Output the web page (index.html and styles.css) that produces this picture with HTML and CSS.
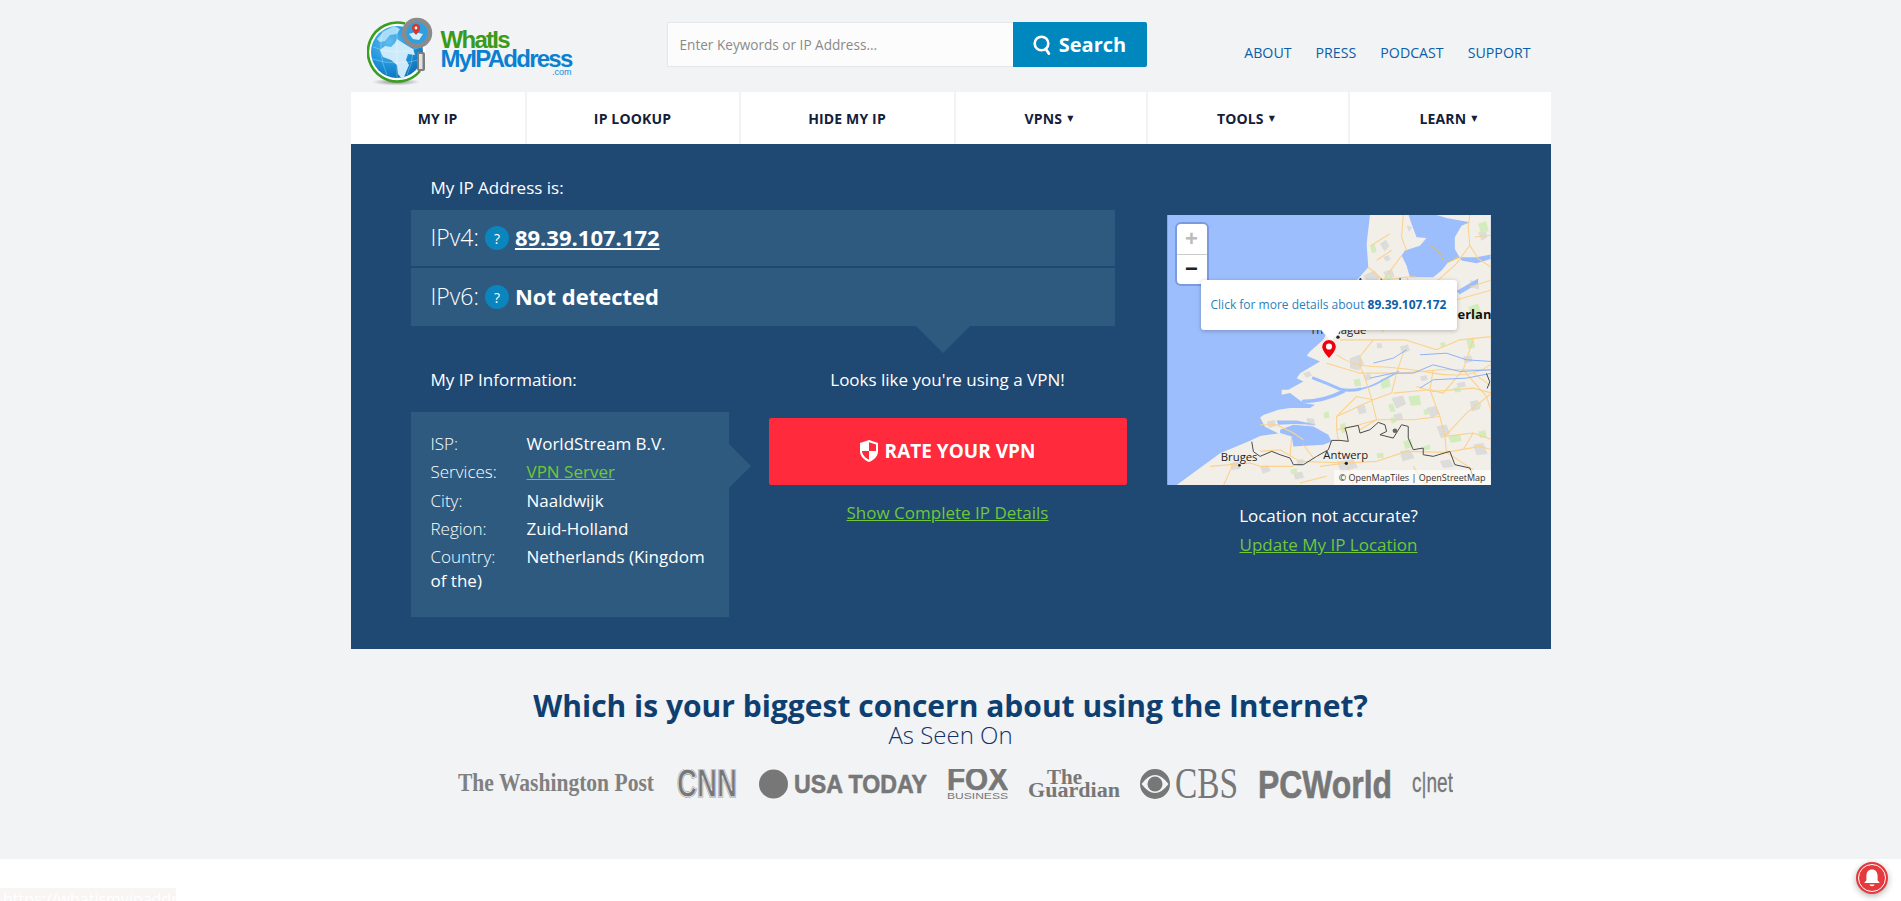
FILE: index.html
```html
<!DOCTYPE html>
<html lang="en">
<head>
<meta charset="utf-8">
<title>What Is My IP Address</title>
<link rel="stylesheet" href="styles.css">
</head>
<body>
<div class="page">
  <header class="header">
    <a class="logo">
      <svg class="logo-globe" width="68" height="68" viewBox="0 0 68 68">
        <defs>
          <radialGradient id="gl" cx="35%" cy="30%" r="80%"><stop offset="0" stop-color="#5fbcf0"/><stop offset=".55" stop-color="#1f94dc"/><stop offset="1" stop-color="#0a6cb6"/></radialGradient>
          <radialGradient id="sh"><stop offset="0" stop-color="#8a8a8a"/><stop offset="1" stop-color="#f1f3f5"/></radialGradient>
        </defs>
        <ellipse cx="29" cy="65" rx="24" ry="3.500" fill="url(#sh)"/>
        <circle cx="30" cy="35" r="29" fill="#fff"/>
        <path d="M38 6.500A29.500 29.500 0 1 0 53 54" fill="none" stroke="#3a9e1f" stroke-width="2.600"/>
        <circle cx="30" cy="35" r="26" fill="url(#gl)"/>
        <path d="M10 22l7-8 10-5 6 3-3 5-7 1-5 6-5 1z" fill="#a9dcf6"/>
        <path d="M30 22l6 4 10 6 2 6-7-1-2 6 3 5-3 7-3 8-5-6-1-9-6-5-8-3-3-7 5-4 6 1 4-4z" fill="#cdeafa"/>
        <path d="M6 30q24 10 48 0M5 42q25 8 50 0M16 12q-6 24 4 46M30 9v52M44 12q6 24-4 46" fill="none" stroke="#fff" stroke-width=".5" opacity=".55"/>
        <rect x="50" y="35" width="8" height="19" rx="2" fill="#7d7d7d"/>
        <rect x="52" y="37" width="3.500" height="15" fill="#e2e2e2"/>
        <circle cx="50" cy="16" r="13" fill="#2f9fe0" stroke="#8b8b8b" stroke-width="4.500"/>
        <path d="M42 17l6-2 8 2-4 6-6-1z" fill="#d5eefb"/>
        <path d="M49 7a4 4 0 0 1 4 4c0 3-4 7-4 7s-4-4-4-7a4 4 0 0 1 4-4z" fill="#d9352a"/>
        <circle cx="49" cy="11" r="1.400" fill="#fff"/>
      </svg>
      <span class="logo-text">
        <span class="logo-what">WhatIs</span>
        <span class="logo-my">MyIPAddress</span>
        <span class="logo-com">.com</span>
      </span>
    </a>
    <form class="search">
      <input class="search-input" type="text" placeholder="Enter Keywords or IP Address...">
      <button class="search-btn" type="button">
        <svg width="19" height="20" viewBox="0 0 19 20"><circle cx="8.500" cy="8.500" r="6.800" fill="none" stroke="#fff" stroke-width="2.600"/><path d="M12.800 14l3 4.600" stroke="#fff" stroke-width="2.800" stroke-linecap="round"/></svg>
        Search
      </button>
    </form>
    <nav class="toplinks">
      <a>ABOUT</a><a>PRESS</a><a>PODCAST</a><a>SUPPORT</a>
    </nav>
  </header>

  <nav class="mainnav">
    <a>MY IP</a>
    <a>IP LOOKUP</a>
    <a>HIDE MY IP</a>
    <a>VPNS <span class="caret">▼</span></a>
    <a>TOOLS <span class="caret">▼</span></a>
    <a>LEARN <span class="caret">▼</span></a>
  </nav>

  <main class="hero">
    <section class="hero-left">
      <div class="label">My IP Address is:</div>
      <div class="ip-row ip-row-4">
        <span class="ip-kind">IPv4:</span><span class="help">?</span><a class="ip-value ip-link">89.39.107.172</a>
      </div>
      <div class="ip-row ip-row-6">
        <span class="ip-kind">IPv6:</span><span class="help">?</span><span class="ip-value">Not detected</span>
      </div>
      <div class="lower">
        <div class="info-col">
          <div class="label label-info">My IP Information:</div>
          <div class="info-box">
            <div class="info-line"><span class="k">ISP:</span>WorldStream B.V.</div>
            <div class="info-line"><span class="k">Services:</span><a class="green">VPN Server</a></div>
            <div class="info-line"><span class="k">City:</span>Naaldwijk</div>
            <div class="info-line"><span class="k">Region:</span>Zuid-Holland</div>
            <div class="info-line"><span class="k">Country:</span>Netherlands (Kingdom of the)</div>
          </div>
        </div>
        <div class="vpn-col">
          <div class="vpn-msg">Looks like you're using a VPN!</div>
          <a class="rate-btn">
            <svg width="18" height="22" viewBox="0 0 18 22"><path d="M9 0l9 3v8c0 5.500-4 9-9 11-5-2-9-5.500-9-11V3z" fill="#fff"/><path d="M9 2.200l7 2.300V11H9zM9 11v8.600C5.200 17.800 2.300 15 2 11z" fill="#ff2a3c"/></svg>
            RATE YOUR VPN
          </a>
          <a class="green details">Show Complete IP Details</a>
        </div>
      </div>
    </section>
    <aside class="hero-right">
      <div class="map">
        <svg class="map-svg" width="324" height="270" viewBox="51 44 972 811">
          <rect x="51" y="44" width="972" height="811" fill="#9dbefc"/>
          <path d="M660 44L650 131 655 201 612 250 575 310 545 370 520 419 480 454 470 467 510 484 450 519 440 534 460 544 415 569 395 569 395 584 420 579 460 609 495 614 480 624 420 624 385 629 340 645 330 652 345 680 385 700 330 708 300 722 210 760 100 840 80 855H1023V44Z" fill="#f2efe9"/>
          <g class="urban">
            <path d="M690 130l18-12 10 20-14 16zM640 225l34-14 16 22-30 24zM700 170l16-6 6 14-14 6zM700 215l26-8 8 22-22 10z"/>
            <path d="M600 290l30-14 14 28-32 12zM770 75l16 6-8 14zM810 70l14-4 4 12-14 4zM985 95l22-6 6 22-18 10zM960 240l24 4 4 24-24-6z"/>
            <g transform="translate(330 389)">
              <path d="M270 85l28-10 14 26-16 22-26-8zM130 130l18-6 8 14-18 6zM420 50l24-6 6 18-22 10zM610 80l24-4 4 20-24 4zM350 40l14 0 4 14-16 2z"/>
              <path d="M395 205l34-8 10 26-30 14zM500 235l26-6 14 24-26 12zM530 290l30-6 10 28-26 14zM630 215l24-4 8 26-26 8zM290 230l24-4 6 22-22 6z"/>
              <path d="M420 365l30-6 14 26-36 10zM230 395l50-6 14 24-50 16zM140 265l22 2 4 20-24 0zM20 275l24-4 4 18-22 6zM400 255l24-6 6 20-24 4z"/>
              <path d="M640 345l30-6 14 34-34 4zM540 395l30-6 12 22-32 4zM100 430l26-4 6 18-26 6zM0 410l24-4 8 18-24 8zM480 140l20-4 4 14-18 4zM590 160l24-4 4 14-24 4zM330 130l-18 6 4 18 18-6z"/>
            </g>
            <path d="M240 790l24-6 8 22-26 4zM440 780l20-2 2 16-20 4z"/>
          </g>
          <g class="woods">
            <path d="M660 135l14-6 6 26-14 4zM705 225l16-4 2 14-14 4zM985 70l24-8 8 30-24 6zM955 320l30-10 14 44-30 6z"/>
            <g transform="translate(330 389)">
              <path d="M280 150l20-4 4 22-18 2zM360 150l28-6 4 26-26 8zM445 200l34-4 4 30-30 2zM490 240l14-2 2 16-12 2zM385 225l14-4 8 24-16 2zM650 220l12-4 2 14-12 2zM580 175l20-4 4 14-18 4z"/>
              <path d="M240 285l16-6 4 28-14 4zM430 335l24-8 4 24-22 8zM390 265l16-4 4 16-14 4zM565 320l36-6 4 20-32 6zM655 305l22-4 4 22-20 2zM490 350l20-6 2 14-18 4zM90 420l20-4 2 16-18 2zM350 370l20 0 2 14-20 2zM190 250l16-6 2 20-14 2zM620 30l20-8 6 30-20 6zM540 40l14-4 4 12-14 4z"/>
            </g>
          </g>
          <g fill="#9dbefc">
            <path d="M775 41L785 71 800 111 830 113 810 136 765 151 755 166 770 196 780 231 850 231 875 211 895 186 928 169 915 146 915 111 935 76 960 66 890 53 850 41Z"/>
            <path d="M930 171L980 171 1023 163V176L980 189 935 181Z"/>
            <path d="M920 272L985 235V250L930 282Z"/>
            <g transform="translate(330 389)">
              <path d="M60 300L100 285 160 290 205 315 215 335 190 345 100 350 95 320 60 310Z"/>
              <path d="M50 272L110 272 170 285 100 283 55 285Z"/>
            </g>
          </g>
          <g fill="none" stroke="#9dbefc" stroke-linecap="round" transform="translate(330 389)">
            <path d="M160 145Q200 160 240 178 270 185 300 178" stroke-width="9"/>
            <path d="M300 178Q340 170 370 150 400 135 415 125" stroke-width="5"/>
            <path d="M130 215Q190 215 250 185" stroke-width="11"/>
          </g>
          <g class="roads" transform="translate(330 389)">
            <path d="M230 75Q280 110 340 110T520 130 696 100M200 100L300 130 430 130 540 120 696 120M300 110L310 130 330 190 350 270"/>
            <path d="M430 70L410 130 395 190 340 210 230 260 230 300M340 30L300 80 300 110M435 30L530 60 600 30 696 20M240 30L340 30 435 30"/>
            <path d="M520 120L510 180 540 260 555 320 560 368 640 420M640 30L610 120 550 190 510 180 400 190M230 260L290 200 340 210"/>
            <path d="M540 260L460 270 350 270 280 290 230 300 235 330M555 320L640 310 696 330M300 300L350 270M180 410L260 400 350 395 440 365 560 368"/>
            <path d="M260 400L280 468M0 365L60 360 120 395 260 400M640 130L696 170M610 120L680 200 696 250M696 190L620 250 555 320"/>
            <path d="M0 285L50 285 100 310 130 330M95 320L90 380M130 345L160 385M470 170L520 185 640 175 696 190M560 368L660 350 696 360M200 440L120 460M460 410L500 468M640 310L610 360"/>
            <path d="M-150 410L-30 400 0 410 100 410M-80 400L-110 468"/>
          </g>
          <g class="roads">
            <path d="M760 44L755 110 770 151M665 135L720 100M680 180L725 150M655 201L700 240 755 166M700 240L770 230 800 300 830 340M610 260L660 330 700 395M770 230L800 230"/>
            <path d="M960 41L955 80 960 135 985 175 1023 200M960 135L920 190 870 235 850 250M1023 105L975 110M960 260L1023 240M880 310L1023 270M850 250L920 330"/>
          </g>
          <path d="M840 135Q868 148 880 180M895 186L930 170" fill="none" stroke="#f0b84a" stroke-width="3"/>
          <g class="rivers" transform="translate(330 389)">
            <path d="M340 100L400 85 440 60M480 75L560 70 620 90 696 95M330 145L400 130 460 130 520 105 600 125 696 120M480 175L520 150 620 145 696 130"/>
          </g>
          <path class="border" d="M305 725L310 755 330 769 365 754 390 764 420 774 430 794 460 794 500 769 535 749 545 721 570 721 595 724 590 699 585 684 625 676 630 699 660 689 685 667 705 674 710 694 690 704 730 714 755 674 775 679 775 714 790 749 820 744 820 764 850 769 900 754 915 794 960 804 970 830"/>
          <path class="border" d="M1010 520L1020 545 1012 565"/>
          <circle cx="735" cy="692" r="7" fill="#666"/>
          <circle cx="564" cy="411" r="5" fill="#222"/><circle cx="589" cy="790" r="5" fill="#222"/><circle cx="268" cy="796" r="4" fill="#222"/>
          <g class="map-labels">
            <text x="480" y="400">The Hague</text>
            <text x="212" y="782">Bruges</text>
            <text x="520" y="778">Antwerp</text>
            <text class="map-country" x="826" y="355">Netherlands</text>
            <text x="620" y="258">Amsterdam</text>
          </g>
        </svg>
        <div class="zoomctl">
          <span class="zoombtn zoom-in">+</span>
          <span class="zoombtn zoom-out">−</span>
        </div>
        <div class="popup">Click for more details about <b>89.39.107.172</b></div>
        <svg class="pin" width="14" height="18" viewBox="0 0 14 18"><path d="M7 0a6.800 6.800 0 0 1 6.800 6.800C13.800 11 7 18 7 18S.2 11 .2 6.800A6.800 6.800 0 0 1 7 0z" fill="#f0000f"/><circle cx="7" cy="6.500" r="3.100" fill="#fff"/></svg>
        <div class="attrib">© OpenMapTiles | OpenStreetMap</div>
      </div>
      <div class="loc-q">Location not accurate?</div>
      <a class="green loc-link">Update My IP Location</a>
    </aside>
  </main>

  <h2 class="concern">Which is your biggest concern about using the Internet?</h2>
  <div class="seen">As Seen On</div>

  <div class="press">
    <svg width="198" height="30" viewBox="0 0 198 30"><text class="p-wapo" x="0" y="22" font-size="26" textLength="196" lengthAdjust="spacingAndGlyphs">The Washington Post</text></svg>
    <svg width="63" height="30" viewBox="0 0 63 30"><text class="p-cnn-a" x="1" y="28" font-size="41" textLength="60" lengthAdjust="spacingAndGlyphs">CNN</text><text class="p-cnn-b" x="1" y="28" font-size="41" textLength="60" lengthAdjust="spacingAndGlyphs">CNN</text></svg>
    <svg width="168" height="30" viewBox="0 0 168 30"><circle cx="14.500" cy="15" r="14.500" fill="#777"/><text class="p-heavy" x="35" y="24" font-size="26" textLength="133" lengthAdjust="spacingAndGlyphs">USA TODAY</text></svg>
    <svg width="61" height="30" viewBox="0 0 61 30"><text class="p-heavy" x="0" y="21" font-size="31" textLength="61" lengthAdjust="spacingAndGlyphs">FOX</text><text class="p-thin" x="0" y="29.500" font-size="9.500" textLength="61" lengthAdjust="spacingAndGlyphs">BUSINESS</text></svg>
    <svg width="92" height="30" viewBox="0 0 92 30"><text class="p-serif-b" x="19" y="15" font-size="22" textLength="35" lengthAdjust="spacingAndGlyphs">The</text><text class="p-serif-b" x="0" y="28" font-size="20" textLength="92" lengthAdjust="spacingAndGlyphs">Guardian</text></svg>
    <svg width="98" height="30" viewBox="0 0 98 30"><path d="M0 15a15 15 0 0 1 30 0 15 15 0 0 1-30 0zM1.500 15Q15-3 28.500 15 15 33 1.500 15z" fill="#777" fill-rule="evenodd"/><circle cx="15" cy="15" r="7.500" fill="#777"/><text class="p-cbs" x="35" y="29" font-size="44" textLength="63" lengthAdjust="spacingAndGlyphs">CBS</text></svg>
    <svg width="134" height="30" viewBox="0 0 134 30"><text class="p-heavy" x="0" y="28.500" font-size="39" textLength="134" lengthAdjust="spacingAndGlyphs">PCWorld</text></svg>
    <svg width="41" height="30" viewBox="0 0 41 30"><text class="p-cnet" x="0" y="23" font-size="28" textLength="41" lengthAdjust="spacingAndGlyphs">c|net</text></svg>
  </div>
</div>

<footer class="footer">
  <div class="url-strip">https://whatismyipaddress.com/i</div>
</footer>

<div class="bell">
  <svg width="32" height="32" viewBox="0 0 32 32"><circle cx="16" cy="16" r="13.500" fill="none" stroke="#fff" stroke-width="1"/><path d="M16 7.500c-3.600 0-5.600 2.700-5.600 6.500v4.200l-2.200 2.800h15.600l-2.200-2.800V14c0-3.800-2-6.500-5.600-6.500z" fill="#fff"/><path d="M13.500 22.500a2.500 1.800 0 0 0 5 0z" fill="#fff"/></svg>
</div>
</body>
</html>
```
FILE: styles.css
```css
* { box-sizing: border-box; }
html, body { margin: 0; padding: 0; }
body {
  background: #f1f3f5;
  font-family: "Open Sans", "Liberation Sans", sans-serif;
  color: #fff;
  overflow: hidden;
  height: 901px;
}
.page { width: 1200px; margin: 0 auto; }

/* header */
.header { height: 92px; display: flex; align-items: flex-start; }
.logo { display: flex; margin: 17px 0 0 16px; width: 205px; gap: 6px; }
.logo-globe { flex: none; }
.logo-text { display: flex; flex-direction: column; font-family: "Liberation Sans", sans-serif; font-weight: 700; margin-top: 13px; }
.logo-what { color: #3a9a1a; font-size: 24px; line-height: 19px; letter-spacing: -1.7px; }
.logo-my { color: #0b7fd0; font-size: 24px; line-height: 19px; letter-spacing: -1.75px; white-space: nowrap; }
.logo-com { color: #0b8fd8; font-size: 9px; line-height: 8px; font-weight: 400; text-align: right; }

.search { display: flex; margin: 22px 0 0 95px; height: 45px; }
.search-input {
  width: 346px; height: 45px; padding: 0 12px;
  border: 1px solid #e6e7e8; border-right: 0; background: #fcfcfc;
  font: 400 13.600px "Open Sans", sans-serif; outline: none;
}
.search-input::placeholder { color: #8a8a8a; opacity: 1; }
.search-btn {
  width: 134px; height: 45px; border: 0; border-radius: 0 2px 2px 0;
  background: #0087be; color: #fff; display: flex; align-items: center; justify-content: center; gap: 7px;
  font: 700 20px "Open Sans", sans-serif; padding: 0;
}
.toplinks { display: flex; gap: 24px; margin: 43px 20px 0 auto; font-size: 14.200px; line-height: 19px; color: #0b5ea8; }

/* nav */
.mainnav {
  display: grid; grid-template-columns: 174px 212px 213px 190px 200px 1fr; gap: 2px;
  height: 52px;
}
.mainnav a {
  background: #fff; color: #14203a; font-weight: 700; font-size: 14px; letter-spacing: .15px;
  display: flex; align-items: center; justify-content: center; gap: 3px;
}
.caret { font-size: 8px; font-family: "DejaVu Sans", sans-serif; margin-left: 2px; margin-right: 3px; }

/* hero */
.hero { background: #1f4873; display: flex; padding: 26px 0 32px 60px; gap: 40px; }
.hero-left { width: 716px; flex: none; }
.label { height: 36px; line-height: 36px; padding-left: 20px; margin-bottom: 4px; font-size: 17px; }
.ip-row {
  width: 704px; background: #2e5a80; display: flex; align-items: center; padding: 0 0 2px 20px; position: relative;
}
.ip-row-4 { height: 56px; margin-bottom: 2px; }
.ip-row-6 { height: 58px; }
.ip-row-6::after {
  content: ""; position: absolute; left: 505px; top: 58px;
  border-style: solid; border-width: 27px 27.500px 0; border-color: #2e5a80 transparent transparent;
}
.ip-kind { font-size: 23px; font-weight: 300; }
.help {
  width: 24px; height: 24px; border-radius: 50%; background: #0a85bd; margin: 2px 6px 0;
  display: flex; align-items: center; justify-content: center; font-size: 14px;
}
.ip-value { font-size: 22px; font-weight: 700; }
.ip-link { text-decoration: underline; }

.lower { display: flex; gap: 40px; margin-top: 38px; }
.info-col { width: 318px; }
.label-info { height: 32px; line-height: 32px; margin-bottom: 16px; }
.info-box {
  position: relative; background: #2e5a80; padding: 20px 20px 24px; height: 205px; font-size: 17px;
}
.info-box::after {
  content: ""; position: absolute; left: 318px; top: 32px;
  border-style: solid; border-width: 22px 0 22px 22px; border-color: transparent transparent transparent #2e5a80;
}
.info-line { line-height: 24px; margin-bottom: 4.250px; }
.k { display: inline-block; width: 96px; font-weight: 300; }
.green { color: #6fc73a; text-decoration: underline; }

.vpn-col { width: 358px; display: flex; flex-direction: column; align-items: center; font-size: 17px; }
.vpn-msg { height: 32px; line-height: 32px; margin-bottom: 22px; }
.rate-btn {
  width: 100%; height: 67px; background: #ff2a3c; border-radius: 2px;
  display: flex; align-items: center; justify-content: center; gap: 7px; font-size: 19px; font-weight: 700; padding-bottom: 2px;
}
.details { margin-top: 17px; line-height: 22px; }

.hero-right { width: 324px; flex: none; padding-top: 45px; display: flex; flex-direction: column; align-items: center; font-size: 17px; }
.map { position: relative; width: 324px; height: 270px; overflow: hidden; margin-bottom: 20px; }
.map-svg { display: block; }
.urban { fill: #dcdcda; }
.woods { fill: #d3ecbe; }
.roads { fill: none; stroke: #fbd18c; stroke-width: 3.200px; stroke-linejoin: round; }
.rivers { fill: none; stroke: #8fb2f6; stroke-width: 3px; }
.border { fill: none; stroke: #4a4a4a; stroke-width: 3px; }
.map-labels text { font-family: "Open Sans", sans-serif; font-size: 34px; fill: #222; }
.map-labels .map-country { font-weight: 700; font-size: 39px; fill: #111; }
.zoomctl {
  position: absolute; left: 10px; top: 9px; width: 30px; height: 60px;
  background: #fff; border-radius: 4px; box-shadow: 0 0 0 2px rgba(60,90,170,.35);
  display: flex; flex-direction: column;
}
.zoombtn { flex: 1; display: flex; align-items: center; justify-content: center; font: 700 22px "Liberation Sans", sans-serif; color: #222; }
.zoom-in { color: #bbb; border-bottom: 1px solid #ccc; }
.popup {
  position: absolute; left: 34px; top: 65px; width: 256px; height: 50px;
  background: #fff; border-radius: 3px; box-shadow: 0 1px 4px rgba(0,0,0,.25);
  font-size: 12px; line-height: 50px; text-align: center; color: #2b7fbd; white-space: nowrap;
}
.popup b { color: #0b5ea8; }
.popup::after {
  content: ""; position: absolute; left: 120px; top: 50px;
  border-style: solid; border-width: 11px 10px 0; border-color: #fff transparent transparent;
}
.pin { position: absolute; left: 155px; top: 125px; }
.attrib {
  position: absolute; right: 0; bottom: 0; padding: 0 5px; height: 15px; line-height: 15px;
  background: rgba(255,255,255,.6); color: #333; font-size: 9px; white-space: nowrap;
}
.loc-q { line-height: 22px; }
.loc-link { line-height: 22px; margin-top: 7px; }

/* below */
.concern { margin: 39px 0 0; text-align: center; color: #0e3f70; font-size: 30px; font-weight: 700; line-height: 36px; }
.seen { margin-top: -3px; text-align: center; color: #12306a; font-size: 24px; font-weight: 300; line-height: 28px; }
.press { display: flex; gap: 20px; margin: 20px 0 0 107px; height: 30px; }
.press svg { flex: none; display: block; }
.p-wapo { font-family: "Liberation Serif", serif; font-weight: 700; fill: #808080; }
.p-serif-b { font-family: "Liberation Serif", serif; font-weight: 700; fill: #777; }
.p-heavy { font-family: "Liberation Sans", sans-serif; font-weight: 700; fill: #777; stroke: #777; stroke-width: .6px; }
.p-thin { font-family: "Liberation Sans", sans-serif; font-weight: 400; fill: #777; }
.p-cbs { font-family: "Liberation Serif", serif; font-weight: 400; fill: #777; }
.p-cnet { font-family: "Liberation Sans", sans-serif; font-weight: 400; fill: #777; stroke: #777; stroke-width: .3px; }
.p-cnn-a { font-family: "Liberation Sans", sans-serif; font-weight: 700; fill: #777; stroke: #777; stroke-width: 1.600px; }
.p-cnn-b { font-family: "Liberation Sans", sans-serif; font-weight: 700; fill: none; stroke: #f1f3f5; stroke-width: .9px; }

.footer { margin-top: 60px; height: 42px; background: #fff; padding-top: 29px; overflow: hidden; }
.url-strip { width: 176px; height: 13px; background: #f9f5f4; color: #fff; font-size: 16px; line-height: 22px; padding-left: 3px; overflow: hidden; white-space: nowrap; }

.bell {
  position: fixed; left: 1856px; top: 862px; width: 32px; height: 32px; border-radius: 50%;
  background: #e5393d; box-shadow: 0 2px 6px rgba(0,0,0,.3);
}
.bell svg { display: block; }
```
